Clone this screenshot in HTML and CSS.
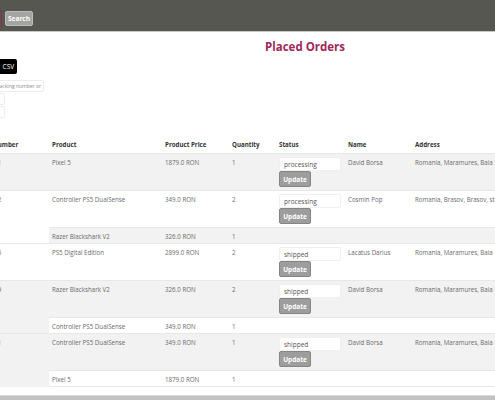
FILE: index.html
```html
<!DOCTYPE html>
<html>
<head>
<meta charset="utf-8">
<link rel="stylesheet" href="styles.css">
</head>
<body>
<header class="topbar">
  <input class="top-input" type="text">
  <button class="search-btn">Search</button>
</header>
<main class="page">
  <h1 class="title">Placed Orders</h1>
  <div class="controls">
    <button class="csv-btn">Export CSV</button>
    <input class="filter" type="text" placeholder="Search by tracking number or name">
    <input class="small-input" type="text">
    <input class="small-input" type="text">
  </div>
  <table class="orders">
    <colgroup>
      <col class="c-num"><col class="c-prod"><col class="c-price"><col class="c-qty"><col class="c-status"><col class="c-name"><col class="c-addr">
    </colgroup>
    <thead>
      <tr><th>Order Number</th><th>Product</th><th>Product Price</th><th>Quantity</th><th>Status</th><th>Name</th><th>Address</th></tr>
    </thead>
    <tbody>
      <tr class="main">
        <td>45120531</td><td>Pixel 5</td><td>1879.0 RON</td><td>1</td>
        <td><div class="status"><input class="status-input" type="text" value="processing"><button class="update-btn">Update</button></div></td>
        <td>David Borsa</td><td>Romania, Maramures, Baia Mare, str. Victoriei 12</td>
      </tr>
      <tr class="main">
        <td rowspan="2">45120532</td><td>Controller PS5 DualSense</td><td>349.0 RON</td><td>2</td>
        <td><div class="status"><input class="status-input" type="text" value="processing"><button class="update-btn">Update</button></div></td>
        <td>Cosmin Pop</td><td>Romania, Brasov, Brasov, str. Lunga 45</td>
      </tr>
      <tr class="sub">
        <td>Razer Blackshark V2</td><td>326.0 RON</td><td>1</td><td></td><td></td><td></td>
      </tr>
      <tr class="main">
        <td>45120565</td><td>PS5 Digital Edition</td><td>2899.0 RON</td><td>2</td>
        <td><div class="status"><input class="status-input" type="text" value="shipped"><button class="update-btn">Update</button></div></td>
        <td>Lacatus Darius</td><td>Romania, Maramures, Baia Mare, str. Independentei 3</td>
      </tr>
      <tr class="main">
        <td rowspan="2">45120579</td><td>Razer Blackshark V2</td><td>326.0 RON</td><td>2</td>
        <td><div class="status"><input class="status-input" type="text" value="shipped"><button class="update-btn">Update</button></div></td>
        <td>David Borsa</td><td>Romania, Maramures, Baia Mare, str. Victoriei 12</td>
      </tr>
      <tr class="sub">
        <td>Controller PS5 DualSense</td><td>349.0 RON</td><td>1</td><td></td><td></td><td></td>
      </tr>
      <tr class="main">
        <td rowspan="2">45120581</td><td>Controller PS5 DualSense</td><td>349.0 RON</td><td>1</td>
        <td><div class="status"><input class="status-input" type="text" value="shipped"><button class="update-btn">Update</button></div></td>
        <td>David Borsa</td><td>Romania, Maramures, Baia Mare, str. Victoriei 12</td>
      </tr>
      <tr class="sub">
        <td>Pixel 5</td><td>1879.0 RON</td><td>1</td><td></td><td></td><td></td>
      </tr>
    </tbody>
  </table>
  <div class="hscroll"></div>
</main>
</body>
</html>
```
FILE: styles.css
```css
html, body {
  margin: 0;
  padding: 0;
  overflow: hidden;
  background: #ffffff;
  font-family: "Open Sans", "Noto Sans", sans-serif;
}

.topbar {
  height: 32px;
  background: #575751;
  border-bottom: 1px solid #c8c8c4;
  display: flex;
  align-items: center;
  padding-top: 5px;
  box-sizing: border-box;
}

.top-input {
  width: 30px;
  height: 17px;
  margin: 0 0 0 -28px;
  box-sizing: border-box;
  border: 1px solid #8e2a4e;
  border-radius: 2px;
  background: #575751;
  padding: 0;
}

.search-btn {
  margin-left: 3px;
  height: 15px;
  width: 28px;
  padding: 0;
  box-sizing: border-box;
  background: #a4a4a2;
  border: 1px solid #bdbdbb;
  border-radius: 2px;
  color: #ffffff;
  font-family: "Open Sans", sans-serif;
  font-weight: 700;
  font-size: 6.5px;
  line-height: 13px;
}

.page {
  display: flex;
  flex-direction: column;
  align-items: flex-start;
}

.title {
  margin: 7px 0 0 265px;
  font-size: 11.5px;
  line-height: 16px;
  font-weight: 700;
  color: #a0285a;
}

.controls {
  display: flex;
  flex-direction: column;
  align-items: flex-start;
  margin-top: 4px;
}

.csv-btn {
  height: 15px;
  padding: 0 3px;
  margin-left: -26px;
  word-spacing: 4px;
  background: #000000;
  color: #ffffff;
  border: none;
  border-radius: 2px;
  font-family: "Open Sans", sans-serif;
  font-size: 6.5px;
  line-height: 15px;
}

.filter {
  margin: 6px 0 0 -31px;
  width: 75px;
  height: 12px;
  box-sizing: border-box;
  border: 1px solid #ececec;
  border-radius: 2px;
  padding: 0 1px 0 2px;
  font-family: "Open Sans", sans-serif;
  font-size: 5px;
  color: #777;
}

.filter::placeholder {
  color: #8a8a8a;
}

.small-input {
  margin: 1px 0 0 -20px;
  width: 25px;
  height: 12px;
  box-sizing: border-box;
  border: 1px solid #ececec;
  border-radius: 2px;
  padding: 0;
}

.orders {
  margin: 19px 0 0 -30px;
  width: 740px;
  table-layout: fixed;
  border-collapse: collapse;
  font-size: 6.2px;
  color: #6a6a6a;
}

.c-num { width: 79px; }
.c-prod { width: 113px; }
.c-price { width: 67px; }
.c-qty { width: 47px; }
.c-status { width: 69px; }
.c-name { width: 67px; }
.c-addr { width: 298px; }

.orders th {
  text-align: left;
  font-weight: 700;
  color: #333;
  padding: 3px 3px 0 3px;
  height: 13px;
  vertical-align: top;
  line-height: 10px;
}

.orders td {
  padding: 4px 3px 0 3px;
  vertical-align: top;
  line-height: 10px;
  white-space: nowrap;
  overflow: hidden;
  border-top: 1px solid #e8e8e8;
}

.orders tbody tr:nth-child(odd) {
  background: #f2f2f2;
}

.orders tr.main td {
  height: 32px;
}

.orders tr.sub td {
  height: 11px;
}

.orders tbody tr:last-child td {
  border-bottom: 1px solid #e8e8e8;
}

.status {
  display: flex;
  flex-direction: column;
  align-items: flex-start;
  margin-top: -1px;
}

.status-input {
  width: 62px;
  height: 14px;
  box-sizing: border-box;
  border: 1px solid #f0f0f0;
  border-radius: 2px;
  background: #fff;
  padding: 0 4px;
  font-family: "Open Sans", sans-serif;
  font-size: 6.5px;
  color: #555;
}

.update-btn {
  width: 32px;
  height: 16px;
  padding: 0;
  box-sizing: border-box;
  background: #9d9d9d;
  border: 1px solid #858585;
  border-radius: 2px;
  color: #fff;
  font-family: "Open Sans", sans-serif;
  font-weight: 700;
  font-size: 6.5px;
}

.hscroll {
  margin-top: 8px;
  width: 100vw;
  height: 7px;
  background: #c1c1c1;
  border-top: 1px solid #dcdcdc;
}
```
